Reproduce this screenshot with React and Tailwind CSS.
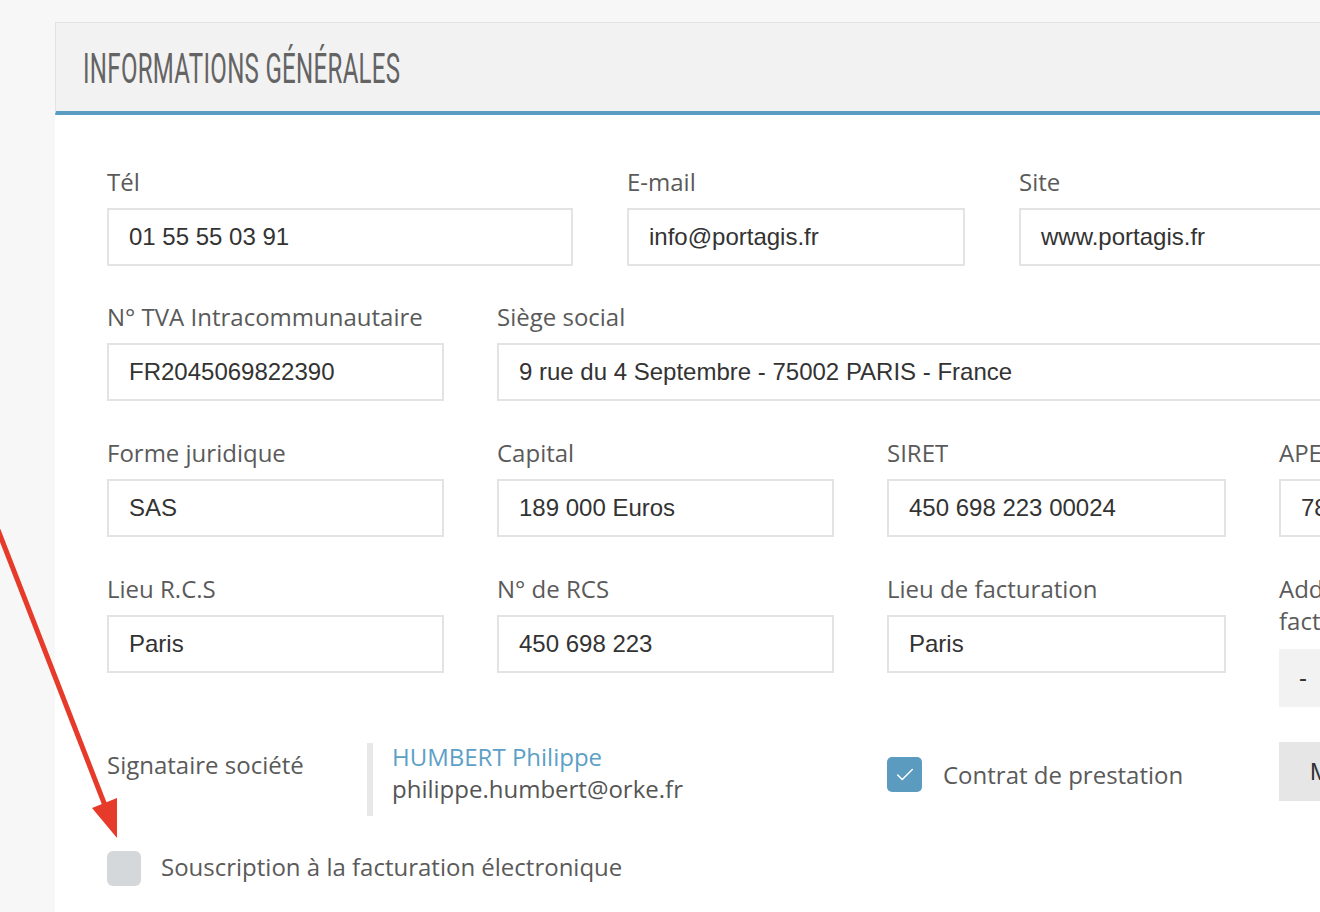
import { Check } from 'lucide-react'

const LABEL = "text-[24px] leading-[32px] text-[#5a5a5a] font-['Open_Sans',sans-serif]"
const VALUE = "text-[24px] text-[#333] font-['Liberation_Sans',Arial,sans-serif]"

function Field({ label, value, className = '' }) {
  return (
    <div className={className}>
      <div className={`${LABEL} mb-[10px] whitespace-nowrap`}>{label}</div>
      <div className={`h-[58px] border-2 border-[#e3e3e3] bg-white flex items-center pl-[20px] whitespace-nowrap overflow-hidden ${VALUE}`}>
        {value}
      </div>
    </div>
  )
}

export default function App() {
  return (
    <div className="relative w-[1320px] h-[912px] overflow-hidden bg-[#f7f7f7]">
      <div className="ml-[55px] mt-[22px] w-[1700px] bg-white">

        {/* Section header */}
        <div className="h-[93px] bg-[#f2f2f2] border-t border-l border-[#e3e3e3] border-b-[4px] border-b-[#5b9cc2] flex items-center pl-[27px]">
          <h2 className="origin-left scale-x-[0.56] whitespace-nowrap text-[43px] leading-none font-normal text-[#646464] font-['Roboto',sans-serif] tracking-[0.5px] mt-[2px]">
            INFORMATIONS GÉNÉRALES
          </h2>
        </div>

        <div className="pl-[52px] pt-[51px] pb-[30px]">

          {/* Contact */}
          <div className="grid grid-cols-[466px_339px_600px] gap-x-[53px]">
            <Field label="Tél" value="01 55 55 03 91" />
            <Field label="E-mail" value="info@portagis.fr" className="ml-[1px]" />
            <Field label="Site" value="www.portagis.fr" className="ml-[1px]" />
          </div>

          <div className="grid grid-cols-[337px_1120px] gap-x-[53px] mt-[35px]">
            <Field label="N° TVA Intracommunautaire" value="FR2045069822390" />
            <Field label="Siège social" value="9 rue du 4 Septembre - 75002 PARIS - France" />
          </div>

          <div className="grid grid-cols-[337px_337px_339px_337px] gap-x-[53px] mt-[36px]">
            <Field label="Forme juridique" value="SAS" />
            <Field label="Capital" value="189 000 Euros" />
            <Field label="SIRET" value="450 698 223 00024" />
            <Field label="APE" value="7830Z" />
          </div>

          <div className="grid grid-cols-[337px_337px_339px_337px] gap-x-[53px] mt-[36px] items-start">
            <Field label="Lieu R.C.S" value="Paris" />
            <Field label="N° de RCS" value="450 698 223" />
            <Field label="Lieu de facturation" value="Paris" />
            <div>
              <div className={`${LABEL} mb-[12px]`}>Addresse de<br />facturation</div>
              <div className={`h-[58px] bg-[#f2f2f2] flex items-center pl-[20px] ${VALUE}`}>-</div>
            </div>
          </div>

          {/* Signataire / contrat */}
          <div className="grid grid-cols-[727px_339px_337px] gap-x-[53px] mt-[35px] items-start">
            <div className="flex items-start">
              <div className={`${LABEL} w-[260px] pt-[7px]`}>Signataire société</div>
              <div className="mt-[1px] border-l-[6px] border-[#e8e8e8] pl-[19px] h-[73px] leading-[32px] font-['Open_Sans',sans-serif] text-[24px]">
                <div className="text-[#5da0c6] -mt-[2px]">HUMBERT Philippe</div>
                <div className="text-[#555]">philippe.humbert@orke.fr</div>
              </div>
            </div>
            <label className="flex items-center gap-[21px] mt-[15px]">
              <span className="w-[35px] h-[35px] rounded-[5px] bg-[#5b9bc0] flex items-center justify-center">
                <Check size={22} strokeWidth={1.6} className="text-white" />
              </span>
              <span className={LABEL}>Contrat de prestation</span>
            </label>
            <div className={`h-[59px] bg-[#e6e6e6] flex items-center pl-[31px] ${VALUE}`}>Modifier</div>
          </div>

          <label className="flex items-center gap-[20px] mt-[35px]">
            <span className="w-[34px] h-[35px] rounded-[6px] bg-[#d5d8db]" />
            <span className={`${LABEL} -mt-[3px]`}>Souscription à la facturation électronique</span>
          </label>
        </div>
      </div>

      {/* Annotation arrow */}
      <svg className="absolute inset-0 pointer-events-none" width="1320" height="912">
        <line x1="-2" y1="530" x2="106" y2="808" stroke="#e63a2a" strokeWidth="5" />
        <polygon points="117,838 92,808 117,798" fill="#e63a2a" />
      </svg>
    </div>
  )
}
